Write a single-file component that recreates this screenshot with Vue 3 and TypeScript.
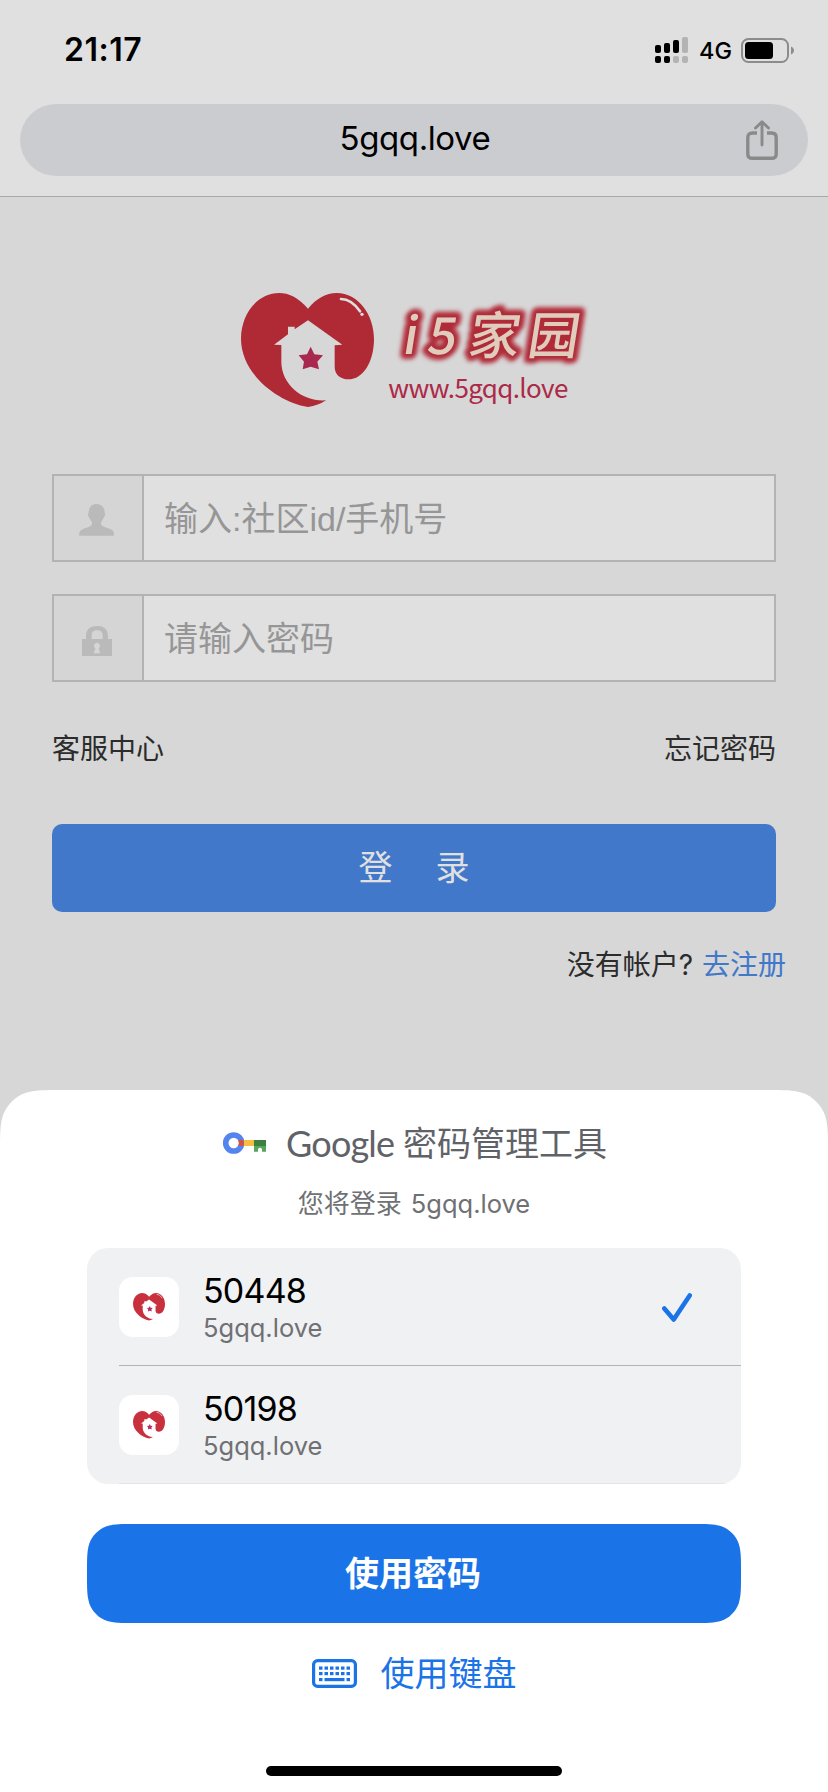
<script setup lang="ts">
interface Account {
  name: string
  site: string
  selected: boolean
}

const site = '5gqq.love'
const accounts: Account[] = [
  { name: '50448', site, selected: true },
  { name: '50198', site, selected: false },
]

const heart =
  'M264 116C235 82 205 69 178 69C110 69 63 135 63 206C63 310 170 395 264 411Q295 407 318 391C250 396 184 345 184 275V225L162 224L204 193V170H224V178L264 151L367 224L344 226V290C344 315 363 328 385 328C430 328 462 275 462 206C462 135 415 69 350 69C318 69 290 85 264 116Z'
const star = 'M272 230L283 253L309 256L292 275L297 298L272 290L248 298L252 275L236 256L261 253Z'

// Outline of a rectangle with continuous ("squircle") corners.
function smoothRect(w: number, h: number, r: number, bottom: boolean): string {
  const k = (n: number) => n * r
  const e = k(1.5287)
  const a = k(1.0885)
  const b = k(0.8684)
  const c = k(0.6315)
  const d = k(0.0749)
  const f = k(0.3728)
  const g = k(0.1691)
  let p = `M0 ${e}C0 ${a} 0 ${b} ${d} ${c}C${g} ${f} ${f} ${g} ${c} ${d}C${b} 0 ${a} 0 ${e} 0`
  p += `H${w - e}C${w - a} 0 ${w - b} 0 ${w - c} ${d}C${w - f} ${g} ${w - g} ${f} ${w - d} ${c}C${w} ${b} ${w} ${a} ${w} ${e}`
  if (!bottom) return `${p}V${h}H0Z`
  p += `V${h - e}C${w} ${h - a} ${w} ${h - b} ${w - d} ${h - c}C${w - g} ${h - f} ${w - f} ${h - g} ${w - c} ${h - d}C${w - b} ${h} ${w - a} ${h} ${w - e} ${h}`
  p += `H${e}C${a} ${h} ${b} ${h} ${c} ${h - d}C${f} ${h - g} ${g} ${h - f} ${d} ${h - c}C0 ${h - b} 0 ${h - a} 0 ${h - e}Z`
  return p
}

const sheetShape = smoothRect(828, 702, 40, false)
const buttonShape = smoothRect(654, 99, 31, true)
const keyColumns = [0, 1, 2, 3, 4, 5]
</script>

<template>
  <div class="screen">
    <header class="top">
      <div class="status">
        <span class="clock">21:17</span>
        <div class="status-right">
          <svg class="signal" viewBox="0 0 33 26">
            <rect x="0" y="8" width="6" height="8" rx="2" />
            <rect x="9" y="6" width="6" height="10" rx="2" />
            <rect x="18" y="3" width="6" height="13" rx="2" />
            <rect x="27" y="0" width="6" height="16" rx="2" class="dim" />
            <rect x="0" y="19" width="6" height="7" rx="2" />
            <rect x="9" y="19" width="6" height="7" rx="2" />
            <rect x="18" y="19" width="6" height="7" rx="2" class="dim" />
            <rect x="27" y="19" width="6" height="7" rx="2" class="dim" />
          </svg>
          <span class="network">4G</span>
          <svg class="battery" viewBox="0 0 53 25">
            <rect x="1" y="1" width="46" height="23" rx="6.5" fill="none" stroke="#8c8c8c" stroke-width="2" />
            <rect x="4" y="4" width="28" height="17" rx="3.5" fill="#000" />
            <path d="M50 8.5C52 9.5 53 11 53 12.500C53 14 52 15.500 50 16.500Z" fill="#8c8c8c" />
          </svg>
        </div>
      </div>
      <div class="address">
        <span class="url">{{ site }}</span>
        <svg class="share" viewBox="0 0 32 40">
          <path d="M11 13H6.500Q1.800 13 1.800 17.500V34Q1.800 38.300 6.500 38.300H25.500Q30.200 38.300 30.200 34V17.500Q30.200 13 25.500 13H21" stroke-width="3.400" />
          <path d="M16 25V2M9.500 8L16 1.800L22.500 8" stroke-width="2.900" stroke-linecap="round" stroke-linejoin="round" />
        </svg>
      </div>
    </header>

    <main class="page">
      <svg class="logo" viewBox="0 0 1140 450">
        <defs>
          <filter id="glow" x="-10%" y="-30%" width="120%" height="160%">
            <feGaussianBlur stdDeviation="6" />
          </filter>
        </defs>
        <path :d="heart" fill="#af2a35" />
        <path :d="star" fill="#a92850" />
        <path d="M363 87C386 87 404 101 420 124" fill="none" stroke="#dedede" stroke-width="8" stroke-linecap="round" />
        <circle cx="426" cy="133" r="5" fill="#dedede" />
        <g class="brand brand-glow" filter="url(#glow)" transform="translate(0 251) skewX(-9)">
          <text x="544" y="0">i</text>
          <text x="617" y="0">5</text>
          <text x="740" y="0">家</text>
          <text x="918" y="0">园</text>
        </g>
        <g class="brand" transform="translate(0 251) skewX(-9)">
          <text x="544" y="0">i</text>
          <text x="617" y="0">5</text>
          <text x="740" y="0">家</text>
          <text x="918" y="0">园</text>
        </g>
        <text class="brand-url" x="505" y="384" textLength="540">www.5gqq.love</text>
      </svg>

      <div class="field">
        <div class="field-icon">
          <svg class="person" viewBox="0 0 105 96">
            <path d="M52 0C67 0 77 10 77 26Q80 28 77 36Q75 40 73 43Q70 51 66 54V61C68 70 96 72 103 82Q106 88 104 95H1Q-1 88 3 82C10 72 37 70 39 61V54Q34 50 32 43Q29 40 28 35Q26 29 29 26C29 10 38 0 52 0Z" />
          </svg>
        </div>
        <span class="placeholder">输入:社区id/手机号</span>
      </div>
      <div class="field">
        <div class="field-icon">
          <svg class="lock" viewBox="0 0 90 90">
            <path fill-rule="evenodd" d="M12 39V30C12 10 24 0 45 0S78 10 78 30V39H90V90H0V39ZM29 39H62V30C62 18 56 13 45 13S29 18 29 30ZM45 50A10 10 0 0 0 40 68L35 82H55L50 68A10 10 0 0 0 45 50Z" />
          </svg>
        </div>
        <span class="placeholder">请输入密码</span>
      </div>

      <div class="links">
        <span>客服中心</span>
        <span>忘记密码</span>
      </div>
      <div class="login"><span>登</span><span>录</span></div>
      <div class="signup">没有帐户<span class="mark">?</span><span class="register">去注册</span></div>
    </main>

    <section class="sheet">
      <svg class="shape" viewBox="0 0 828 702"><path :d="sheetShape" fill="#fff" /></svg>
      <div class="sheet-body">
        <div class="title">
          <svg class="key" viewBox="0 0 129 66">
            <circle cx="32" cy="33" r="24" fill="none" stroke="#5484ed" stroke-width="17" />
            <path d="M46 24H61Q65 33 61 42H46Q50 33 46 24Z" fill="#d9503f" />
            <path d="M62 24H93V42H62Q66 33 62 24Z" fill="#f5bd42" />
            <rect x="93" y="24" width="36" height="18" fill="#3c8040" />
            <path d="M93 42H129V59H117V51Q111 44 105 51V59H93Z" fill="#58a55c" />
          </svg>
          <span class="google">Google</span>
          <span class="title-cn">密码管理工具</span>
        </div>
        <div class="subtitle"><span>您将登录</span><span class="site">{{ site }}</span></div>

        <div class="accounts">
          <div v-for="account in accounts" :key="account.name" class="account">
            <div class="tile">
              <svg class="mini" viewBox="63 69 399 342">
                <path :d="heart" fill="#c9303e" />
                <path :d="star" fill="#b92d60" />
                <path d="M363 87C386 87 404 101 424 128" fill="none" stroke="#eeb5b9" stroke-width="12" stroke-linecap="round" />
              </svg>
            </div>
            <div class="account-row">
              <div class="who">
                <span class="name">{{ account.name }}</span>
                <span class="site">{{ account.site }}</span>
              </div>
              <svg v-if="account.selected" class="check" viewBox="0 0 30 29">
                <path d="M2.300 15.500L11.700 26.500L27.700 2.500" />
              </svg>
            </div>
          </div>
        </div>

        <div class="use-password">
          <svg class="shape" viewBox="0 0 654 99"><path :d="buttonShape" fill="#1b73e8" /></svg>
          <span class="use-label">使用密码</span>
        </div>
        <div class="use-keyboard">
          <svg class="keyboard" viewBox="0 0 45 29">
            <rect x="1.600" y="1.600" width="41.800" height="25.800" rx="4" fill="none" stroke="#1b73e8" stroke-width="3.200" />
            <g fill="#1b73e8">
              <rect v-for="c in keyColumns" :key="'a' + c" :x="7 + c * 5.500" y="7.500" width="3.500" height="3.200" />
              <rect v-for="c in keyColumns" :key="'b' + c" :x="7 + c * 5.500" y="13" width="3.500" height="3.200" />
              <rect x="7" y="19" width="3.500" height="3.200" />
              <rect x="12.500" y="19" width="20" height="3.200" />
              <rect x="34.500" y="19" width="3.500" height="3.200" />
            </g>
          </svg>
          <span class="keyboard-label">使用键盘</span>
        </div>
        <div class="home-bar"></div>
      </div>
    </section>
  </div>
</template>

<style>
body {
  margin: 0;
  background: #d7d7d7;
}
</style>

<style scoped>
.screen {
  position: relative;
  width: 828px;
  height: 1792px;
  overflow: hidden;
  background: #d7d7d7;
  font-family: Inter, 'Noto Sans CJK SC', sans-serif;
  color: #000;
}
svg {
  display: block;
  flex: none;
}
.top {
  box-sizing: border-box;
  height: 197px;
  background: #e0e0e0;
  border-bottom: 1px solid #a9a9a9;
}
.status {
  box-sizing: border-box;
  height: 104px;
  padding: 0 34px 4px 64px;
  display: flex;
  align-items: center;
  justify-content: space-between;
}
.clock {
  font-size: 32px;
  font-weight: 600;
  line-height: 40px;
  letter-spacing: 0.5px;
}
.status-right {
  display: flex;
  align-items: center;
}
.signal {
  width: 33px;
  height: 26px;
}
.signal .dim {
  fill: #b3b3b3;
}
.network {
  width: 32px;
  margin: 2px 10px 0 11px;
  font-size: 23.5px;
  font-weight: 450;
  line-height: 30px;
}
.battery {
  width: 53px;
  height: 25px;
}
.address {
  box-sizing: border-box;
  height: 72px;
  margin: 0 20px;
  padding: 0 30px;
  border-radius: 36px;
  background: #cbccd0;
  display: grid;
  grid-template-columns: 32px 1fr 32px;
  align-items: center;
}
.url {
  grid-column: 2;
  text-align: center;
  font-size: 33px;
  line-height: 40px;
  letter-spacing: -0.4px;
  margin: -4px 0 0 2px;
}
.share {
  width: 32px;
  height: 40px;
  fill: none;
  stroke: #8a8a8b;
}
.page {
  padding: 73px 52px 0;
}
.logo {
  width: 380px;
  height: 150px;
  margin: 0 0 54px 168px;
}
.brand {
  font-family: 'Noto Sans CJK SC', sans-serif;
  font-size: 153px;
  font-weight: 500;
  fill: #dfccbd;
}
.brand-glow {
  fill: #b02a38;
  stroke: #b02a38;
  stroke-width: 32px;
  stroke-linejoin: round;
}
.brand-url {
  font-family: 'Noto Sans CJK SC', sans-serif;
  font-size: 78px;
  fill: #ac2947;
}
.field {
  box-sizing: border-box;
  height: 88px;
  margin-bottom: 32px;
  border: 2px solid #b3b3b3;
  background: #e0e0e0;
  display: flex;
  align-items: center;
}
.field-icon {
  box-sizing: border-box;
  width: 90px;
  height: 84px;
  border-right: 2px solid #b3b3b3;
  background: #d5d5d5;
  display: flex;
  align-items: center;
  justify-content: center;
  flex: none;
}
.person {
  width: 35px;
  height: 32px;
  margin: 3px 3px 0 0;
  fill: #bababa;
}
.lock {
  width: 30px;
  height: 30px;
  margin: 6px 3px 0 0;
  fill: #bababa;
}
.placeholder {
  margin: 2px 0 0 20px;
  font-family: 'Liberation Sans', 'Noto Sans CJK SC', sans-serif;
  font-size: 34px;
  line-height: 44px;
  color: #969696;
}
.links {
  display: flex;
  justify-content: space-between;
  margin-top: 45px;
  font-size: 28px;
  line-height: 44px;
  color: #2c2c2c;
}
.login {
  height: 88px;
  margin-top: 53px;
  border-radius: 10px;
  background: #4178ca;
  display: flex;
  align-items: center;
  justify-content: center;
  gap: 43px;
  font-size: 34px;
  line-height: 44px;
  color: #e0e0e0;
}
.signup {
  display: flex;
  justify-content: flex-end;
  margin: 31px -10px 0 0;
  font-size: 28px;
  line-height: 44px;
  color: #2c2c2c;
}
.mark {
  margin-right: 9px;
}
.register {
  color: #4178ca;
}
.sheet {
  position: absolute;
  left: 0;
  top: 1090px;
  width: 828px;
  height: 702px;
}
.shape {
  position: absolute;
  left: 0;
  top: 0;
  width: 100%;
  height: 100%;
}
.sheet-body {
  position: relative;
  padding: 31px 87px 0;
}
.title {
  display: flex;
  align-items: center;
  height: 44px;
  margin-left: 136px;
  line-height: 44px;
  color: #5f6368;
}
.key {
  width: 43px;
  height: 22px;
}
.google {
  width: 117px;
  margin-left: 20px;
  font-family: Lato, sans-serif;
  font-size: 36px;
  letter-spacing: -0.8px;
}
.title-cn {
  margin-top: 2px;
  font-size: 34px;
}
.subtitle {
  display: flex;
  justify-content: center;
  gap: 9px;
  margin-top: 21px;
  line-height: 36px;
  font-size: 26px;
  color: #707174;
}
.site {
  font-size: 25.5px;
  line-height: 34px;
  color: #6f7073;
}
.subtitle .site {
  line-height: 36px;
}
.accounts {
  height: 236px;
  margin-top: 26px;
  border-radius: 21px;
  overflow: hidden;
  background: #f0f1f3;
}
.account {
  display: flex;
  align-items: center;
  height: 118px;
  padding-left: 32px;
}
.tile {
  width: 60px;
  height: 60px;
  border-radius: 14px;
  background: #fff;
  display: flex;
  align-items: center;
  justify-content: center;
}
.mini {
  width: 32px;
  height: 27.5px;
}
.account-row {
  flex: 1;
  display: flex;
  align-items: center;
  justify-content: space-between;
  height: 118px;
  padding: 0 49px 0 24px;
}
.account:first-child {
  background: linear-gradient(#b0b3b7, #b0b3b7) 32px 117px / 622px 1px no-repeat;
}
.account:last-child {
  background: linear-gradient(#e3e4e8, #e3e4e8) 32px 117px / 622px 1px no-repeat;
}
.who {
  display: flex;
  flex-direction: column;
  padding-top: 2px;
}
.name {
  font-size: 34px;
  line-height: 40px;
  letter-spacing: -0.8px;
}
.check {
  width: 30px;
  height: 29px;
  fill: none;
  stroke: #1b73e8;
  stroke-width: 4.6px;
  stroke-linecap: round;
  stroke-linejoin: round;
}
.use-password {
  position: relative;
  height: 99px;
  margin-top: 40px;
  display: flex;
  align-items: center;
  justify-content: center;
}
.use-label {
  position: relative;
  margin-right: 2px;
  font-size: 34px;
  font-weight: 700;
  line-height: 44px;
  color: #fff;
}
.use-keyboard {
  display: flex;
  align-items: center;
  justify-content: center;
  gap: 24px;
  height: 44px;
  margin-top: 28px;
  font-size: 34px;
  line-height: 44px;
  color: #1b73e8;
}
.keyboard-label {
  padding-top: 2px;
}
.keyboard {
  width: 45px;
  height: 29px;
}
.home-bar {
  width: 296px;
  height: 10px;
  margin: 71px auto 0;
  border-radius: 5px;
  background: #000;
}
</style>
